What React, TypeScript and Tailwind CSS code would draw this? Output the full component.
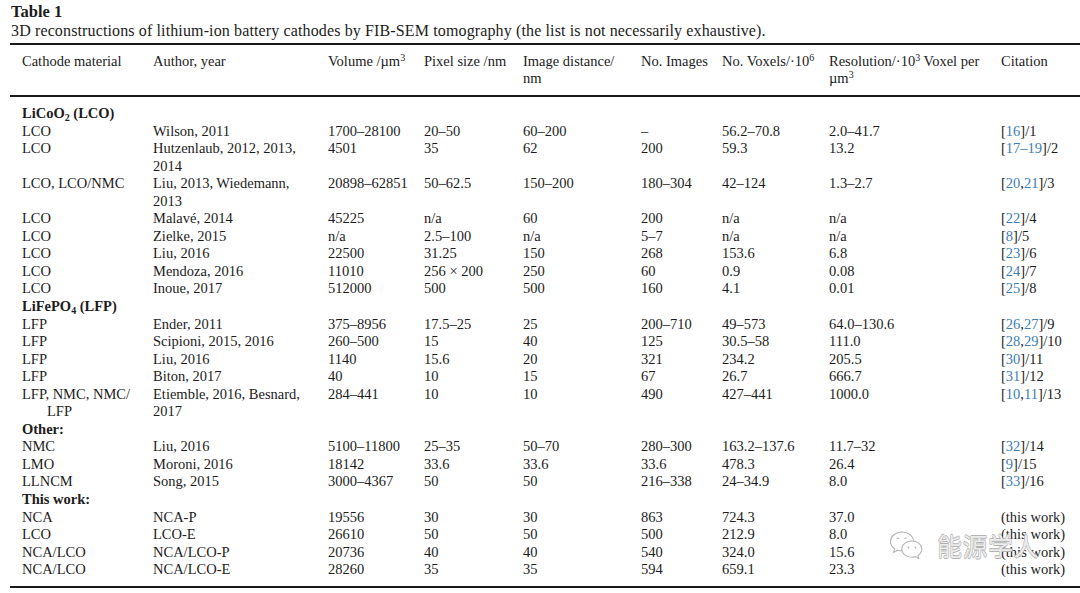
import React from 'react';

type Cite = { refs: string[]; n: number } | null;

interface Row {
  material: string[];
  author: string[];
  volume: string;
  pixel: string;
  distance: string;
  images: string;
  voxels: string;
  resolution: string;
  cite: Cite;
}

interface Group {
  label: React.ReactNode;
  rows: Row[];
}

const cols = 'grid grid-cols-[131px_175px_96px_99px_118px_81px_107px_172px_1fr]';

const r = (
  material: string | string[],
  author: string | string[],
  volume: string,
  pixel: string,
  distance: string,
  images: string,
  voxels: string,
  resolution: string,
  cite: Cite
): Row => ({
  material: Array.isArray(material) ? material : [material],
  author: Array.isArray(author) ? author : [author],
  volume,
  pixel,
  distance,
  images,
  voxels,
  resolution,
  cite,
});

const groups: Group[] = [
  {
    label: (
      <>
        LiCoO<sub className="text-[10px]">2</sub> (LCO)
      </>
    ),
    rows: [
      r('LCO', 'Wilson, 2011', '1700–28100', '20–50', '60–200', '–', '56.2–70.8', '2.0–41.7', { refs: ['16'], n: 1 }),
      r('LCO', ['Hutzenlaub, 2012, 2013,', '2014'], '4501', '35', '62', '200', '59.3', '13.2', { refs: ['17–19'], n: 2 }),
      r('LCO, LCO/NMC', ['Liu, 2013, Wiedemann,', '2013'], '20898–62851', '50–62.5', '150–200', '180–304', '42–124', '1.3–2.7', { refs: ['20', '21'], n: 3 }),
      r('LCO', 'Malavé, 2014', '45225', 'n/a', '60', '200', 'n/a', 'n/a', { refs: ['22'], n: 4 }),
      r('LCO', 'Zielke, 2015', 'n/a', '2.5–100', 'n/a', '5–7', 'n/a', 'n/a', { refs: ['8'], n: 5 }),
      r('LCO', 'Liu, 2016', '22500', '31.25', '150', '268', '153.6', '6.8', { refs: ['23'], n: 6 }),
      r('LCO', 'Mendoza, 2016', '11010', '256 × 200', '250', '60', '0.9', '0.08', { refs: ['24'], n: 7 }),
      r('LCO', 'Inoue, 2017', '512000', '500', '500', '160', '4.1', '0.01', { refs: ['25'], n: 8 }),
    ],
  },
  {
    label: (
      <>
        LiFePO<sub className="text-[10px]">4</sub> (LFP)
      </>
    ),
    rows: [
      r('LFP', 'Ender, 2011', '375–8956', '17.5–25', '25', '200–710', '49–573', '64.0–130.6', { refs: ['26', '27'], n: 9 }),
      r('LFP', 'Scipioni, 2015, 2016', '260–500', '15', '40', '125', '30.5–58', '111.0', { refs: ['28', '29'], n: 10 }),
      r('LFP', 'Liu, 2016', '1140', '15.6', '20', '321', '234.2', '205.5', { refs: ['30'], n: 11 }),
      r('LFP', 'Biton, 2017', '40', '10', '15', '67', '26.7', '666.7', { refs: ['31'], n: 12 }),
      r(['LFP, NMC, NMC/', 'LFP'], ['Etiemble, 2016, Besnard,', '2017'], '284–441', '10', '10', '490', '427–441', '1000.0', { refs: ['10', '11'], n: 13 }),
    ],
  },
  {
    label: 'Other:',
    rows: [
      r('NMC', 'Liu, 2016', '5100–11800', '25–35', '50–70', '280–300', '163.2–137.6', '11.7–32', { refs: ['32'], n: 14 }),
      r('LMO', 'Moroni, 2016', '18142', '33.6', '33.6', '33.6', '478.3', '26.4', { refs: ['9'], n: 15 }),
      r('LLNCM', 'Song, 2015', '3000–4367', '50', '50', '216–338', '24–34.9', '8.0', { refs: ['33'], n: 16 }),
    ],
  },
  {
    label: 'This work:',
    rows: [
      r('NCA', 'NCA-P', '19556', '30', '30', '863', '724.3', '37.0', null),
      r('LCO', 'LCO-E', '26610', '50', '50', '500', '212.9', '8.0', null),
      r('NCA/LCO', 'NCA/LCO-P', '20736', '40', '40', '540', '324.0', '15.6', null),
      r('NCA/LCO', 'NCA/LCO-E', '28260', '35', '35', '594', '659.1', '23.3', null),
    ],
  },
];

function Citation({ cite }: { cite: Cite }) {
  if (!cite) return <>(this work)</>;
  return (
    <>
      [
      {cite.refs.map((ref, i) => (
        <React.Fragment key={i}>
          {i > 0 && ','}
          <span className="text-[#3b7db5]">{ref}</span>
        </React.Fragment>
      ))}
      ]/{cite.n}
    </>
  );
}

function Lines({ lines, hang }: { lines: string[]; hang?: boolean }) {
  return (
    <div>
      {lines.map((line, i) => (
        <div key={i} className={hang && i > 0 ? 'pl-[25px]' : ''}>
          {line}
        </div>
      ))}
    </div>
  );
}

function WeChatLogo() {
  return (
    <svg width="36" height="30" viewBox="0 0 36 30" fill="none">
      {/* back bubble */}
      <path
        d="M13 2C6.4 2 1.5 6.2 1.5 11.4c0 3 1.6 5.6 4.2 7.4l-1.1 3.6 4.2-2.2c1.3.4 2.7.6 4.2.6"
        fill="white"
        stroke="#b5b5b5"
        strokeWidth="1.1"
        strokeLinecap="round"
      />
      <path d="M13 2c6.2 0 11 3.8 11.5 8.6" stroke="#b5b5b5" strokeWidth="1.1" strokeLinecap="round" />
      <path d="M8 8.5q1-1.2 2 0M15.5 8.5q1-1.2 2 0" stroke="#b5b5b5" strokeWidth="1" strokeLinecap="round" />
      {/* front bubble */}
      <path
        d="M23 11c-5.8 0-10.3 3.6-10.3 8.1s4.5 8.1 10.3 8.1c1.2 0 2.3-.2 3.4-.5l3.5 1.9-.9-3.1c2.3-1.5 3.8-3.8 3.8-6.4 0-4.5-4.3-8.1-9.8-8.1z"
        fill="white"
        stroke="#b5b5b5"
        strokeWidth="1.1"
        strokeLinejoin="round"
      />
      <circle cx="19.5" cy="17.5" r="0.9" fill="#b5b5b5" />
      <circle cx="26.5" cy="17.5" r="0.9" fill="#b5b5b5" />
    </svg>
  );
}

export default function App() {
  return (
    <div className="relative w-[1080px] h-[593px] overflow-hidden bg-white pl-[10px] text-[#1c1c1c] font-['Liberation_Serif','Times_New_Roman',serif]">
      <div className="pt-[2px] pl-px text-[16.5px] leading-[20px] font-bold">Table 1</div>
      <div className="pl-px text-[16px] leading-[18px] tracking-[0.13px]">
        3D reconstructions of lithium-ion battery cathodes by FIB-SEM tomography (the list is not necessarily exhaustive).
      </div>

      <div className="mt-[3px] border-t-2 border-[#1a1a1a]" />

      {/* header */}
      <div className={`${cols} pl-[12px] pt-[8px] pb-[8px] text-[14.5px] leading-[17px]`}>
        <div>Cathode material</div>
        <div>Author, year</div>
        <div>
          Volume /µm<sup className="text-[10px]">3</sup>
        </div>
        <div>Pixel size /nm</div>
        <Lines lines={['Image distance/', 'nm']} />
        <div>No. Images</div>
        <div>
          No. Voxels/·10<sup className="text-[10px]">6</sup>
        </div>
        <div>
          <div>
            Resolution/·10<sup className="text-[10px]">3</sup> Voxel per
          </div>
          <div>
            µm<sup className="text-[10px]">3</sup>
          </div>
        </div>
        <div>Citation</div>
      </div>

      <div className="border-t-2 border-[#1a1a1a]" />

      {/* body */}
      <div className="pl-[12px] pt-[8px] pb-[7px] text-[14.5px] leading-[17.55px]">
        {groups.map((g, gi) => (
          <React.Fragment key={gi}>
            <div className="font-bold">{g.label}</div>
            {g.rows.map((row, ri) => (
              <div key={ri} className={cols}>
                <Lines lines={row.material} hang />
                <Lines lines={row.author} />
                <div>{row.volume}</div>
                <div>{row.pixel}</div>
                <div>{row.distance}</div>
                <div>{row.images}</div>
                <div>{row.voxels}</div>
                <div>{row.resolution}</div>
                <div>
                  <Citation cite={row.cite} />
                </div>
              </div>
            ))}
          </React.Fragment>
        ))}
      </div>

      <div className="border-t-2 border-[#1a1a1a]" />

      {/* watermark */}
      <div className="absolute left-[889px] top-[530px] flex items-center gap-[12px]">
        <WeChatLogo />
        <span className="text-[25px] leading-[30px] tracking-[0.5px] text-white/75 font-['Noto_Sans_CJK_SC',sans-serif] [text-shadow:0.6px_0_#b3b3b3,-0.6px_0_#b3b3b3,0_0.6px_#b3b3b3,0_-0.6px_#b3b3b3]">
          能源学人
        </span>
      </div>
    </div>
  );
}
